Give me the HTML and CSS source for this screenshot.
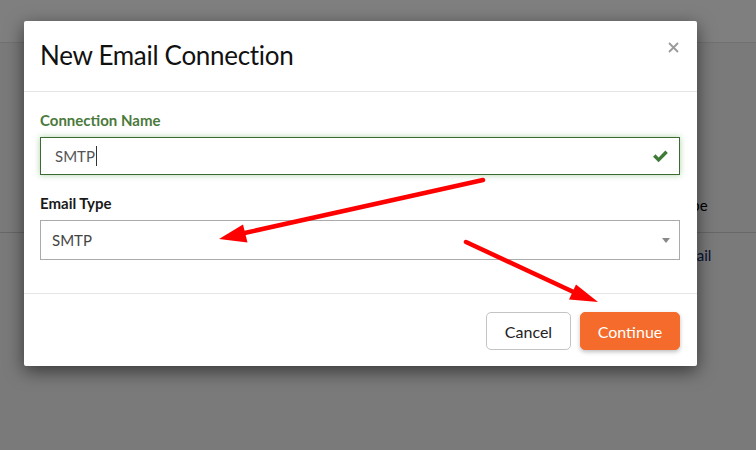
FILE: index.html
```html
<!DOCTYPE html>
<html>
<head>
<meta charset="utf-8">
<link rel="stylesheet" href="styles.css">
</head>
<body>
<div class="page">
  <header class="topbar"></header>
  <main class="content">
    <div class="thead"><span class="cell-type">Type</span></div>
    <div class="trow"><a class="cell-type link">Email</a></div>
  </main>
</div>
<div class="overlay">
  <div class="modal">
    <div class="modal-header">
      <h1 class="modal-title">New Email Connection</h1>
      <button class="close" aria-label="Close">
        <svg width="11" height="11" viewBox="0 0 11 11"><path d="M1 1L10 10M10 1L1 10" stroke="#9a9a9a" stroke-width="1.8" fill="none"/></svg>
      </button>
    </div>
    <div class="modal-body">
      <div class="field success">
        <label class="label">Connection Name</label>
        <div class="input">
          <span class="value">SMTP</span><span class="caret-line"></span>
          <svg class="check" width="17" height="14" viewBox="0 0 16 13"><path d="M1 7.2L3.3 4.9L6.2 7.8L12.6 1.4L14.9 3.7L6.2 12.4Z" fill="#3f7a37"/></svg>
        </div>
      </div>
      <div class="field">
        <label class="label">Email Type</label>
        <div class="select">
          <span class="value">SMTP</span>
          <span class="dropdown"></span>
        </div>
      </div>
    </div>
    <div class="modal-footer">
      <button class="btn btn-default">Cancel</button>
      <button class="btn btn-primary">Continue</button>
    </div>
  </div>
  <svg class="arrows" width="756" height="450" viewBox="0 0 756 450">
    <line x1="483" y1="180" x2="240" y2="234" stroke="#fe0000" stroke-width="4.5" stroke-linecap="round"/>
    <polygon points="219,239 247.5,242.5 243,224.5" fill="#fe0000"/>
    <line x1="466" y1="242" x2="580" y2="295" stroke="#fe0000" stroke-width="4.5" stroke-linecap="round"/>
    <polygon points="598,302 569,299.5 576,284.5" fill="#fe0000"/>
  </svg>
</div>
</body>
</html>
```
FILE: styles.css
```css
* { box-sizing: border-box; }
html, body { margin: 0; padding: 0; }
body {
  width: 756px;
  height: 450px;
  overflow: hidden;
  font-family: Lato, "Open Sans", sans-serif;
  background: #f4f4f4;
  position: relative;
}
.page { height: 450px; display: flex; flex-direction: column; }
.topbar { height: 43px; background: #fff; border-bottom: 1px solid #e2e2e2; }
.content { flex: 1; padding-top: 147px; }
.thead {
  height: 43px;
  border-bottom: 1px solid #cfcfcf;
  padding-top: 5px;
  font-size: 15px;
  font-weight: 400;
  color: #000;
  line-height: 20px;
}
.trow { height: 44px; display: flex; align-items: center; font-size: 15px; }
.cell-type { margin-left: 676px; display: block; }
.link { color: #0a2a66; }

.overlay {
  position: absolute;
  inset: 0;
  background: rgba(0, 0, 0, 0.5);
}
.modal {
  position: absolute;
  left: 24px;
  top: 21px;
  width: 673px;
  height: 345px;
  background: #fff;
  border-radius: 2px;
  box-shadow: 0 5px 18px rgba(0, 0, 0, 0.55);
  display: flex;
  flex-direction: column;
}
.modal-header {
  display: flex;
  justify-content: space-between;
  align-items: flex-start;
  padding: 16px 18px 18px 16px;
  border-bottom: 1px solid #e5e5e5;
}
.modal-title {
  margin: 0;
  font-size: 26px;
  font-weight: 400;
  line-height: 36px;
  color: #111;
  letter-spacing: -0.3px;
}
.close {
  border: 0;
  background: none;
  padding: 0;
  margin-top: 5px;
  width: 11px;
  height: 11px;
  display: flex;
}
.modal-body {
  padding: 18px 17px 33px 16px;
  display: flex;
  flex-direction: column;
  gap: 18px;
}
.field { display: flex; flex-direction: column; gap: 7px; }
.label {
  font-size: 15px;
  font-weight: 700;
  line-height: 20px;
  color: #1a1a1a;
}
.success .label { color: #4a7a3c; }
.input {
  height: 38px;
  border: 1px solid #3c6b34;
  box-shadow: 0 0 6px rgba(80, 160, 60, 0.45);
  display: flex;
  align-items: center;
  padding: 0 10px 0 14px;
  font-size: 15px;
  color: #555;
}
.caret-line { width: 1px; height: 20px; background: #333; margin-left: 1px; }
.check { margin-left: auto; }
.select {
  height: 40px;
  border: 1px solid #aaa;
  display: flex;
  align-items: center;
  padding: 0 9px 0 11px;
  font-size: 15px;
  color: #444;
}
.dropdown {
  margin-left: auto;
  width: 0;
  height: 0;
  border-left: 4.5px solid transparent;
  border-right: 4.5px solid transparent;
  border-top: 5px solid #888;
}
.modal-footer {
  border-top: 1px solid #e5e5e5;
  flex: 1;
  display: flex;
  justify-content: flex-end;
  align-items: flex-start;
  gap: 9px;
  padding: 18px 17px 0 0;
}
.btn {
  font-family: Lato, "Open Sans", sans-serif;
  font-size: 16px;
  height: 38px;
  border-radius: 5px;
  padding: 0;
  cursor: pointer;
}
.btn-default {
  width: 85px;
  background: #fff;
  border: 1px solid #c4c4c4;
  color: #222;
}
.btn-primary {
  width: 100px;
  background: #f46b2c;
  border: 1px solid #f46b2c;
  color: #fff;
  box-shadow: 0 2px 4px rgba(0, 0, 0, 0.25);
}
.arrows { position: absolute; left: 0; top: 0; }
```
